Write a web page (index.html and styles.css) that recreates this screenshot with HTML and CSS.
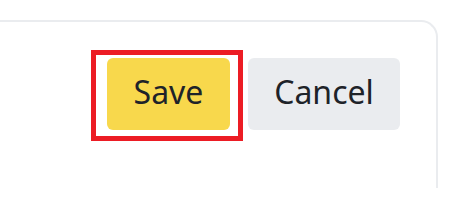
FILE: index.html
```html
<!DOCTYPE html>
<html>
<head>
  <meta charset="utf-8">
  <title>Save / Cancel</title>
  <link rel="stylesheet" href="styles.css">
</head>
<body>
<div class="panel">
  <div class="actions">
    <button class="btn btn-primary">Save<span class="mark"></span></button>
    <button class="btn btn-secondary">Cancel</button>
  </div>
</div>
</body>
</html>
```

FILE: styles.css
```css
body {
  margin: 0;
  background: #fff;
  font-family: "Noto Sans", "Open Sans", sans-serif;
  overflow: hidden;
}

.panel {
  box-sizing: border-box;
  margin: 20px 0 0 -40px;
  width: 478px;
  height: 168px;
  border-top: 2px solid #eaecef;
  border-right: 2px solid #eaecef;
  border-top-right-radius: 17px;
}

.actions {
  display: flex;
  justify-content: flex-end;
  gap: 18px;
  padding: 36px 36px 0 0;
}

.btn {
  position: relative;
  height: 72px;
  border: 0;
  border-radius: 6px;
  font-family: inherit;
  font-size: 32px;
  color: #1e2329;
  padding: 0 0 6px;
}

.btn-primary {
  width: 123px;
  background: #f8d84c;
}

.btn-secondary {
  width: 152px;
  background: #eaecef;
}

.mark {
  position: absolute;
  left: -16px;
  top: -8px;
  width: 152px;
  height: 91px;
  box-sizing: border-box;
  border: 5px solid #ec1c24;
}
```
